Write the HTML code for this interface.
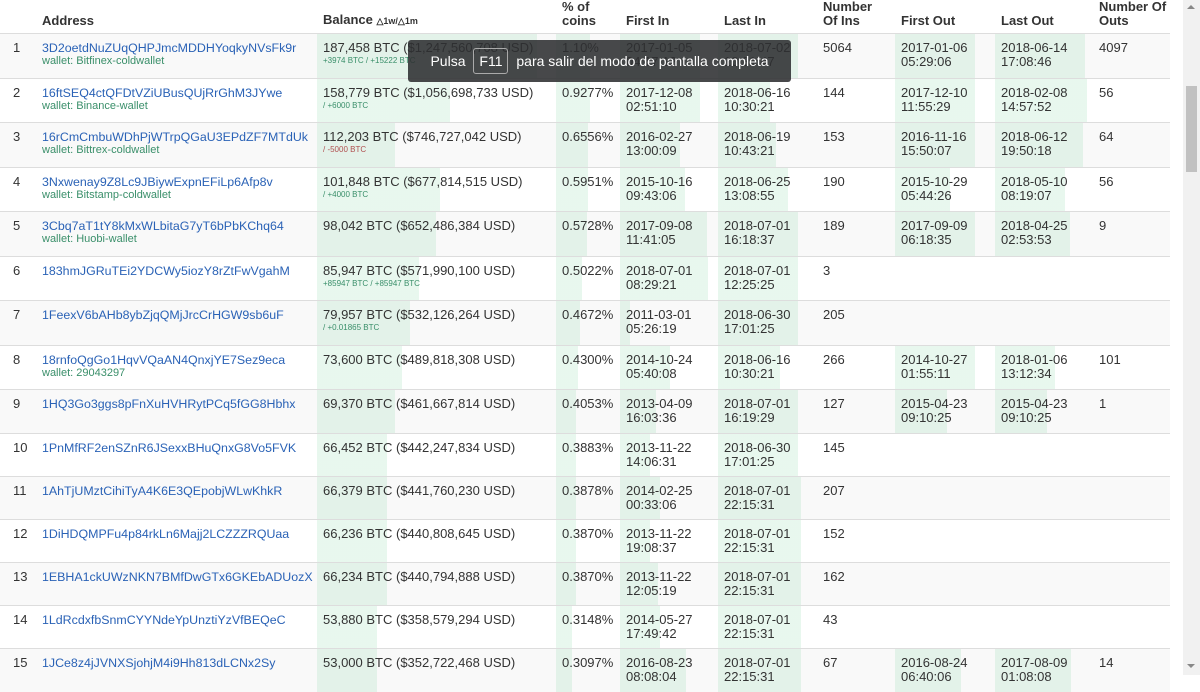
<!DOCTYPE html>
<html><head><meta charset="utf-8"><style>
html,body{margin:0;padding:0;background:#fff;width:1200px;height:675px;overflow:hidden;font-family:"Liberation Sans",Arial,sans-serif;color:#333;font-size:13px}
table{position:absolute;left:0;top:0;width:1170px;border-collapse:collapse;table-layout:fixed}
th{font-weight:bold;text-align:left;vertical-align:bottom;padding:0 0 10px 6px;height:23px;line-height:14px;border-bottom:2px solid #ddd;font-size:13px}
td{vertical-align:top;padding:7px 0 0 6px;line-height:14px;border-top:1px solid #ddd;white-space:nowrap;overflow:hidden}
tr.s td{background-color:#f9f9f9}
td.n{padding-left:13px}
a{color:#2a62b6;text-decoration:none;font-size:12.4px}
.w{color:#3a8f6a;font-size:11px;line-height:13px}
.d{color:#3a8f6a;font-size:8px;line-height:12px}
.d.r{color:#b05050}
.sm{font-size:9px;font-weight:bold}
.ov{position:absolute;left:408px;top:40px;width:383px;height:42px;background:rgba(45,47,49,.88);border-radius:3px;color:#fff;font-size:14px;line-height:42px;text-align:center}
.k{display:inline-block;border:1px solid #aaa;border-radius:3px;padding:0 5px;line-height:24px;margin:0 4px}
.sb{position:absolute;left:1183px;top:0;width:17px;height:675px;background:#f1f1f1}
.th{position:absolute;left:1186px;top:86px;width:11px;height:86px;background:#c1c1c1}
</style></head><body>
<table>
<colgroup><col style="width:36px"><col style="width:281px"><col style="width:239px"><col style="width:64px"><col style="width:98px"><col style="width:99px"><col style="width:78px"><col style="width:100px"><col style="width:98px"><col style="width:77px"></colgroup>
<tr><th></th><th>Address</th><th>Balance <span class="sm">△1w/△1m</span></th><th>% of<br>coins</th><th>First In</th><th>Last In</th><th>Number<br>Of Ins</th><th>First Out</th><th>Last Out</th><th>Number Of<br>Outs</th></tr>
</table>
<table style="top:33px">
<colgroup><col style="width:36px"><col style="width:281px"><col style="width:239px"><col style="width:64px"><col style="width:98px"><col style="width:99px"><col style="width:78px"><col style="width:100px"><col style="width:98px"><col style="width:77px"></colgroup>
<tbody id="b"></tbody>
</table>
<div class="ov">Pulsa <span class="k">F11</span> para salir del modo de pantalla completa</div>
<div class="sb"></div><div class="th"></div>
<div style="position:absolute;left:1187px;top:5px;width:0;height:0;border-left:4px solid transparent;border-right:4px solid transparent;border-bottom:4px solid #888"></div>
<div style="position:absolute;left:1187px;top:664px;width:0;height:0;border-left:4px solid transparent;border-right:4px solid transparent;border-top:4px solid #888"></div>
<script>
var R=[
[1,"3D2oetdNuZUqQHPJmcMDDHYoqkyNVsFk9r","wallet: Bitfinex-coldwallet","187,458 BTC ($1,247,560,708 USD)","+3974 BTC / +15222 BTC","1.10%","2017-01-05","04:17:12","2018-07-02","10:31:47","5064","2017-01-06","05:29:06","2018-06-14","17:08:46","4097",[220,34,80,80,80,90]],
[2,"16ftSEQ4ctQFDtVZiUBusQUjRrGhM3JYwe","wallet: Binance-wallet","158,779 BTC ($1,056,698,733 USD)","/ +6000 BTC","0.9277%","2017-12-08","02:51:10","2018-06-16","10:30:21","144","2017-12-10","11:55:29","2018-02-08","14:57:52","56",[133,34,80,52,80,92]],
[3,"16rCmCmbuWDhPjWTrpQGaU3EPdZF7MTdUk","wallet: Bittrex-coldwallet","112,203 BTC ($746,727,042 USD)","/ -5000 BTC","0.6556%","2016-02-27","13:00:09","2018-06-19","10:43:21","153","2016-11-16","15:50:07","2018-06-12","19:50:18","64",[78,32,60,58,80,88]],
[4,"3Nxwenay9Z8Lc9JBiywExpnEFiLp6Afp8v","wallet: Bitstamp-coldwallet","101,848 BTC ($677,814,515 USD)","/ +4000 BTC","0.5951%","2015-10-16","09:43:06","2018-06-25","13:08:55","190","2015-10-29","05:44:26","2018-05-10","08:19:07","56",[123,32,65,70,55,70]],
[5,"3Cbq7aT1tY8kMxWLbitaG7yT6bPbKChq64","wallet: Huobi-wallet","98,042 BTC ($652,486,384 USD)","","0.5728%","2017-09-08","11:41:05","2018-07-01","16:18:37","189","2017-09-09","06:18:35","2018-04-25","02:53:53","9",[119,31,87,80,80,75]],
[6,"183hmJGRuTEi2YDCWy5iozY8rZtFwVgahM","","85,947 BTC ($571,990,100 USD)","+85947 BTC / +85947 BTC","0.5022%","2018-07-01","08:29:21","2018-07-01","12:25:25","3","","","","","",[102,26,88,80,0,0]],
[7,"1FeexV6bAHb8ybZjqQMjJrcCrHGW9sb6uF","","79,957 BTC ($532,126,264 USD)","/ +0.01865 BTC","0.4672%","2011-03-01","05:26:19","2018-06-30","17:01:25","205","","","","","",[93,24,10,80,0,0]],
[8,"18rnfoQgGo1HqvVQaAN4QnxjYE7Sez9eca","wallet: 29043297","73,600 BTC ($489,818,308 USD)","","0.4300%","2014-10-24","05:40:08","2018-06-16","10:30:21","266","2014-10-27","01:55:11","2018-01-06","13:12:34","101",[85,22,50,62,80,60]],
[9,"1HQ3Go3ggs8pFnXuHVHRytPCq5fGG8Hbhx","","69,370 BTC ($461,667,814 USD)","","0.4053%","2013-04-09","16:03:36","2018-07-01","16:19:29","127","2015-04-23","09:10:25","2015-04-23","09:10:25","1",[78,20,36,80,52,52]],
[10,"1PnMfRF2enSZnR6JSexxBHuQnxG8Vo5FVK","","66,452 BTC ($442,247,834 USD)","","0.3883%","2013-11-22","14:06:31","2018-06-30","17:01:25","145","","","","","",[70,20,30,80,0,0]],
[11,"1AhTjUMztCihiTyA4K6E3QEpobjWLwKhkR","","66,379 BTC ($441,760,230 USD)","","0.3878%","2014-02-25","00:33:06","2018-07-01","22:15:31","207","","","","","",[70,20,40,83,0,0]],
[12,"1DiHDQMPFu4p84rkLn6Majj2LCZZZRQUaa","","66,236 BTC ($440,808,645 USD)","","0.3870%","2013-11-22","19:08:37","2018-07-01","22:15:31","152","","","","","",[70,20,30,83,0,0]],
[13,"1EBHA1ckUWzNKN7BMfDwGTx6GKEbADUozX","","66,234 BTC ($440,794,888 USD)","","0.3870%","2013-11-22","12:05:19","2018-07-01","22:15:31","162","","","","","",[70,20,38,83,0,0]],
[14,"1LdRcdxfbSnmCYYNdeYpUnztiYzVfBEQeC","","53,880 BTC ($358,579,294 USD)","","0.3148%","2014-05-27","17:49:42","2018-07-01","22:15:31","43","","","","","",[60,16,40,83,0,0]],
[15,"1JCe8z4jJVNXSjohjM4i9Hh813dLCNx2Sy","","53,000 BTC ($352,722,468 USD)","","0.3097%","2016-08-23","08:08:04","2018-07-01","22:15:31","67","2016-08-24","06:40:06","2017-08-09","01:08:08","14",[60,16,66,83,66,76]]];
var h="";
function bg(w){return w?' style="background-image:linear-gradient(rgba(0,170,70,.09),rgba(0,170,70,.09));background-size:'+w+'px 100%;background-repeat:no-repeat"':'';}
R.forEach(function(r,i){
 var ht=i<8?44.5:(i==8?44:43);
 var b=r[16];
 h+='<tr class="'+(i%2==0?'s':'')+'" style="height:'+ht+'px">'+
 '<td class="n">'+r[0]+'</td>'+
 '<td><a>'+r[1]+'</a>'+(r[2]?'<div class="w">'+r[2]+'</div>':'')+'</td>'+
 '<td'+bg(b[0])+'>'+r[3]+(r[4]?'<div class="d'+(r[4].indexOf('-')>0?' r':'')+'">'+r[4]+'</div>':'')+'</td>'+
 '<td'+bg(b[1])+'>'+r[5]+'</td>'+
 '<td'+bg(b[2])+'>'+r[6]+'<br>'+r[7]+'</td>'+
 '<td'+bg(b[3])+'>'+r[8]+'<br>'+r[9]+'</td>'+
 '<td>'+r[10]+'</td>'+
 '<td'+bg(b[4])+'>'+r[11]+(r[12]?'<br>'+r[12]:'')+'</td>'+
 '<td'+bg(b[5])+'>'+r[13]+(r[14]?'<br>'+r[14]:'')+'</td>'+
 '<td>'+r[15]+'</td></tr>';
});
document.getElementById('b').innerHTML=h;
</script>
</body></html>
